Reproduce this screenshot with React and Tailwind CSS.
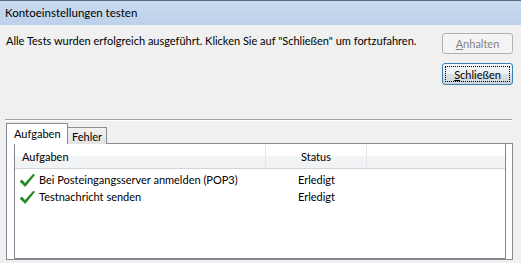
function Check() {
  return (
    <svg width="16" height="16" viewBox="0 0 16 16" className="shrink-0">
      <path d="M1 9.5 L3 8 L6 11.5 L14.5 2 L15.5 3 L6.2 14.5 Z" fill="#1f8f1f" stroke="#0d6b0d" strokeWidth="0.6" strokeLinejoin="round" />
    </svg>
  );
}

function Row({ name, status }) {
  return (
    <div className="flex h-[17px] items-center">
      <div className="flex w-[251px] items-center gap-[4px] pl-[4px]">
        <Check />
        <span>{name}</span>
      </div>
      <div className="w-[101px] text-center">{status}</div>
    </div>
  );
}

export default function App() {
  return (
    <div className="w-[521px] h-[263px] bg-[#f0f0f0] overflow-hidden text-[11px] text-black leading-none flex flex-col whitespace-nowrap" style={{ fontFamily: 'Lato, "Liberation Sans", sans-serif' }}>
      {/* titelleiste */}
      <div className="h-[25px] shrink-0 border-t border-[#5b6b80] bg-gradient-to-b from-[#c9dbef] to-[#bcd1ea] flex items-center pl-[5px]">
        <span className="text-[11.5px]">Kontoeinstellungen testen</span>
      </div>

      <div className="h-[94px] shrink-0 flex">
        <div className="flex-1 min-w-0 pl-[6px] pt-[10px]">
          Alle Tests wurden erfolgreich ausgeführt. Klicken Sie auf "Schließen" um fortzufahren.
        </div>
        <div className="w-[71px] shrink-0 mr-[8px] pt-[8px] flex flex-col gap-[9px]">
          <button className="h-[21px] border border-[#adb2b5] rounded-[3px] bg-[#f4f4f4] text-[#838383]">
            <span className="underline">A</span>nhalten
          </button>
          <button className="h-[22px] border border-[#3c7fb1] rounded-[3px] bg-[linear-gradient(#f4f8fb_0%,#ebf0f4_48%,#dde2e6_52%,#cfd4d8_100%)] p-[2px]">
            <div className="h-full border border-dotted border-black flex items-center justify-center">
              <span><span className="underline">S</span>chließen</span>
            </div>
          </button>
        </div>
      </div>

      <div className="ml-[5px] w-[507px] h-[2px] border-t border-[#a0a0a0] border-b border-b-white shrink-0" />

      {/* reiter */}
      <div className="mt-[2px] ml-[6px] flex items-end h-[21px] shrink-0 relative z-10">
        <div className="w-[62px] h-[21px] bg-white border border-b-0 border-[#898c95] pl-[7px] pt-[4px]">Aufgaben</div>
        <div className="w-[39px] h-[17px] bg-gradient-to-b from-[#f2f2f2] to-[#e3e3e3] border border-l-0 border-b-0 border-[#898c95] pl-[4px] pt-[3px]">Fehler</div>
      </div>

      <div className="ml-[6px] w-[507px] h-[117px] -mt-[1px] bg-white border border-[#898c95] flex pl-[7px] pr-[6px]">
        <div className="flex-1 border-x border-b border-[#828790] flex flex-col pt-[1px]">
          <div className="h-[24px] flex border-b border-[#d5d5d5] bg-[linear-gradient(#ffffff_0%,#ffffff_45%,#f3f4f6_50%,#f1f2f4_100%)]">
            <div className="w-[251px] flex items-center pl-[7px] border-r border-[#e3e5e8]">Aufgaben</div>
            <div className="w-[101px] flex items-center justify-center border-r border-[#e3e5e8]">Status</div>
          </div>
          <div className="pt-[2px]">
            <Row name="Bei Posteingangsserver anmelden (POP3)" status="Erledigt" />
            <Row name="Testnachricht senden" status="Erledigt" />
          </div>
        </div>
      </div>
    </div>
  );
}
